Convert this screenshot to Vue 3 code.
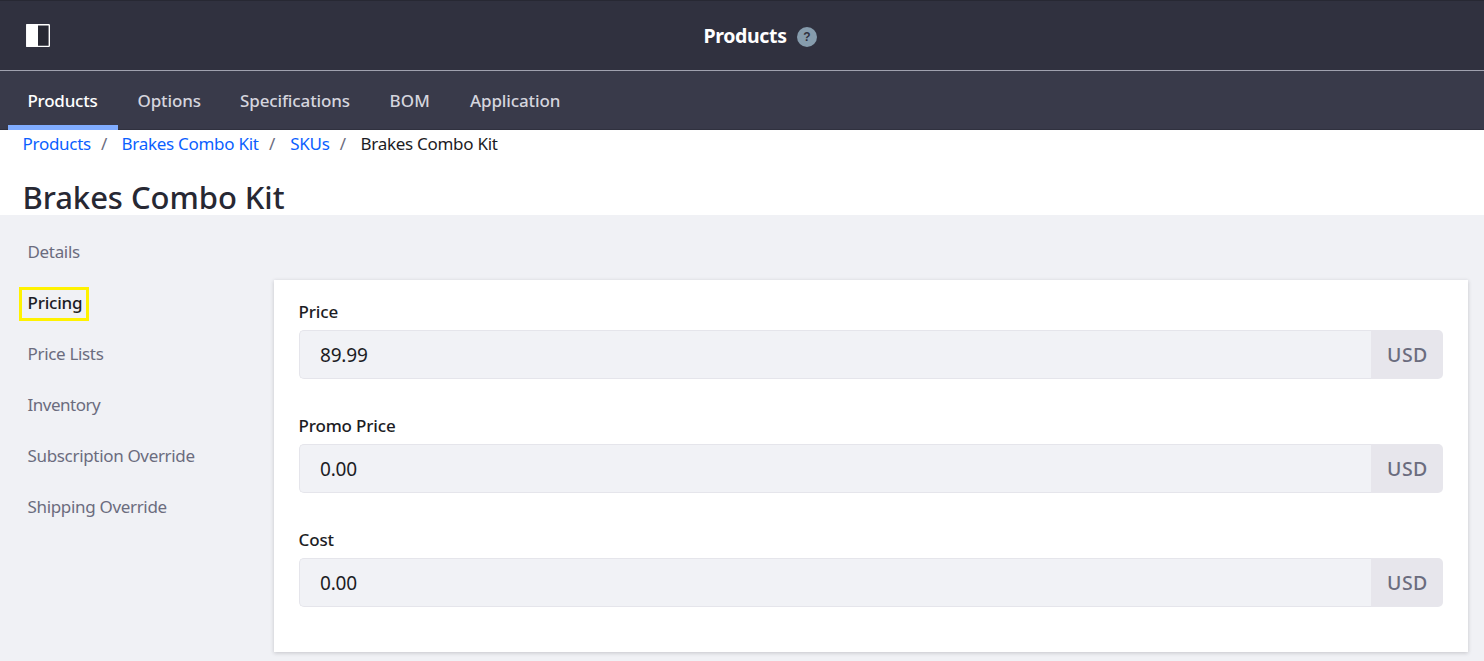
<script setup>
const tabs = [
  { label: 'Products', cls: 'tab-products' },
  { label: 'Options', cls: 'tab-options' },
  { label: 'Specifications', cls: 'tab-specifications' },
  { label: 'BOM', cls: 'tab-bom' },
  { label: 'Application', cls: 'tab-application' },
]
const sections = [
  { label: 'Details' },
  { label: 'Pricing', cls: 'current' },
  { label: 'Price Lists' },
  { label: 'Inventory', cls: 'tight' },
  { label: 'Subscription Override' },
  { label: 'Shipping Override' },
]
const fields = [
  { label: 'Price', value: '89.99' },
  { label: 'Promo Price', value: '0.00' },
  { label: 'Cost', value: '0.00' },
]
</script>

<template>
  <div class="page">
    <header class="topbar">
      <svg class="toggle" width="24" height="24" viewBox="0 0 24 24">
        <rect x="0.9" y="0.75" width="22.4" height="21.6" rx="0.5" fill="#272833" stroke="#fff" stroke-width="1.4" />
        <rect x="0.2" y="0.1" width="11.8" height="22.9" rx="0.5" fill="#fff" />
      </svg>
      <div class="heading">
        <span class="heading-text">Products</span>
        <span class="help">?</span>
      </div>
    </header>

    <nav class="tabs">
      <a v-for="tab in tabs" :key="tab.label" class="tab" :class="tab.cls">{{ tab.label }}</a>
    </nav>

    <div class="intro">
      <div class="crumbs">
        <a class="crumb c1">Products</a><span class="slash s1">/</span>
        <a class="crumb c2">Brakes Combo Kit</a><span class="slash s2">/</span>
        <a class="crumb c3">SKUs</a><span class="slash s3">/</span>
        <span class="crumb last">Brakes Combo Kit</span>
      </div>
      <h1 class="title">Brakes Combo Kit</h1>
    </div>

    <main class="content">
      <aside class="side">
        <a v-for="item in sections" :key="item.label" class="side-item">
          <span :class="item.cls">{{ item.label }}</span>
        </a>
      </aside>
      <section class="card">
        <div v-for="field in fields" :key="field.label" class="field">
          <label class="label">{{ field.label }}</label>
          <div class="group">
            <div class="value">{{ field.value }}</div>
            <div class="unit">USD</div>
          </div>
        </div>
      </section>
    </main>
  </div>
</template>

<style>
body {
  background: #f0f1f5;
}
</style>

<style scoped>
.page {
  box-sizing: border-box;
  height: 661px;
  overflow: hidden;
  font-family: "Noto Sans", "Open Sans", sans-serif;
  font-size: 17px;
  color: #1c1c24;
  background: #f0f1f5;
  display: flex;
  flex-direction: column;
}
.page * {
  box-sizing: border-box;
}
.topbar {
  flex: none;
  height: 71px;
  display: grid;
  grid-template-columns: 704px 1fr;
  align-items: start;
  background: #30313f;
  border-top: 1px solid #272833;
  border-bottom: 1px solid #a0a1af;
}
.toggle {
  display: block;
  margin: 23px 0 0 26px;
}
.heading {
  display: flex;
  align-items: center;
  padding-top: 20px;
  margin-left: -0.5px;
}
.heading-text {
  width: 93.5px;
  font-size: 19.5px;
  font-weight: 700;
  line-height: 29px;
  letter-spacing: -0.35px;
  color: #fff;
}
.help {
  width: 20px;
  height: 20px;
  margin-top: 3px;
  border-radius: 50%;
  background: #869cad;
  color: #30313f;
  font-family: "Liberation Sans", Arial, sans-serif;
  font-size: 12px;
  font-weight: 700;
  line-height: 20px;
  text-align: center;
}
.tabs {
  flex: none;
  height: 59px;
  display: flex;
  padding-left: 7.5px;
  background: #393a4a;
  border-bottom: 1px solid #30313f;
}
.tab {
  padding-left: 20px;
  line-height: 59px;
  font-weight: 500;
  letter-spacing: -0.13px;
  color: #d5d5de;
  white-space: nowrap;
}
.tab-products {
  width: 110px;
  height: 59px;
  letter-spacing: -0.25px;
  color: #fff;
  border-bottom: 5px solid #80acff;
}
.tab-options {
  width: 102.5px;
}
.tab-specifications {
  width: 149.5px;
}
.tab-bom {
  width: 80.5px;
  letter-spacing: 0.1px;
}
.intro {
  flex: none;
  height: 85px;
  padding: 2px 0 0 22.5px;
  background: #fff;
}
.crumbs {
  display: flex;
  height: 24px;
  line-height: 24px;
  letter-spacing: -0.28px;
  white-space: nowrap;
}
.crumb {
  color: #0b5fff;
}
.crumb.last {
  color: #1c1c24;
}
.slash {
  color: #6b6c7e;
}
.c1 {
  width: 78.5px;
}
.s1 {
  width: 20.5px;
}
.c2 {
  width: 147.5px;
}
.s2 {
  width: 21.3px;
}
.c3 {
  width: 49.5px;
}
.s3 {
  width: 20.7px;
}
.title {
  margin: 21px 0 0;
  font-size: 31px;
  font-weight: 500;
  line-height: 40px;
  letter-spacing: -0.05px;
  color: #272833;
}
.content {
  flex: 1;
  display: flex;
}
.side {
  flex: none;
  width: 273.5px;
  padding: 10.5px 0 0 27.5px;
}
.side-item {
  display: block;
  height: 51px;
  line-height: 51px;
  letter-spacing: -0.33px;
  color: #6b6c7e;
  white-space: nowrap;
}
.side-item .tight {
  letter-spacing: -0.5px;
}
.side-item .current {
  display: inline-block;
  height: 34px;
  margin-left: -9px;
  padding: 0 4px 0 6px;
  border: 3px solid #fff200;
  line-height: 26px;
  font-weight: 500;
  letter-spacing: -0.2px;
  color: #1c1c24;
}
.card {
  flex: none;
  width: 1194.5px;
  height: 372.5px;
  margin-top: 64.5px;
  padding: 20px 25px 0;
  background: #fff;
  box-shadow: 0 1px 4px rgba(39, 40, 51, 0.22);
}
.field {
  height: 114px;
}
.label {
  display: block;
  height: 30px;
  line-height: 24px;
  font-weight: 500;
  letter-spacing: -0.15px;
  color: #1c1c24;
}
.group {
  display: flex;
  height: 49.5px;
  font-size: 19px;
}
.value {
  flex: 1;
  padding-left: 20.5px;
  line-height: 48px;
  letter-spacing: -0.2px;
  background: #f1f2f6;
  border: 1px solid #e5e5eb;
  border-right: 0;
  border-radius: 5px 0 0 5px;
}
.unit {
  width: 72px;
  padding-left: 16px;
  font-size: 19.5px;
  line-height: 50px;
  font-weight: 500;
  letter-spacing: 0.5px;
  color: #6b6c7e;
  background: #e7e6ec;
  border-radius: 0 5px 5px 0;
}
</style>
